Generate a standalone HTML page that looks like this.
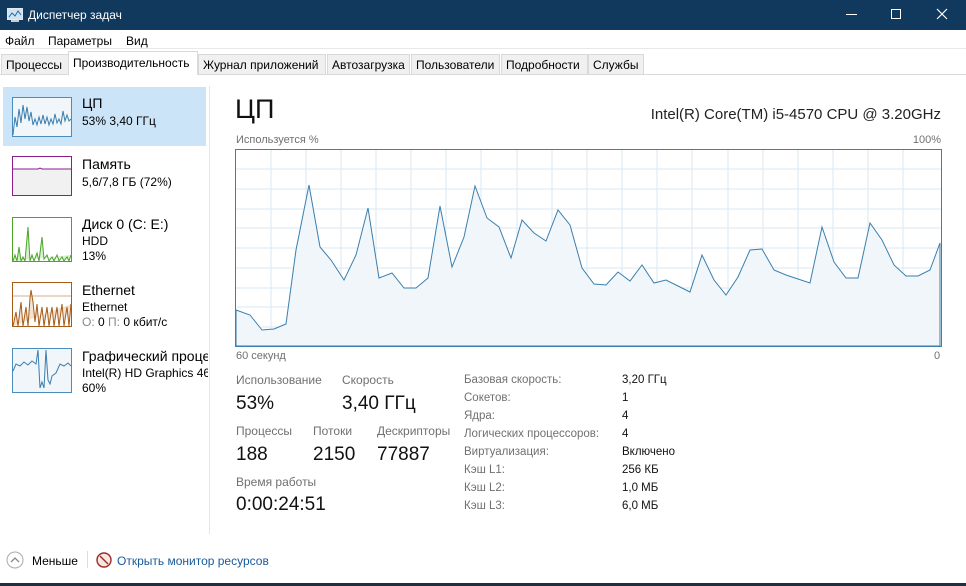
<!DOCTYPE html>
<html><head><meta charset="utf-8"><style>
*{margin:0;padding:0;box-sizing:border-box}
body{width:966px;height:586px;overflow:hidden;background:#fff;font-family:"Liberation Sans",sans-serif;color:#000;position:relative}
.a{position:absolute;white-space:nowrap}
.tb{left:0;top:0;width:966px;height:30px;background:#11395e;color:#fff;font-size:12px}
.tab{position:absolute;top:54px;height:21px;background:#f0f0f0;border:1px solid #d9d9d9;font-size:12px;padding:3px 4px 0 4px}
.g{color:#707070;font-size:12px}
.big{font-size:19px;color:#111}
.r{font-size:11.5px;color:#707070}
.v{font-size:11.5px;color:#111}
</style></head><body>
<div class="a tb">
 <svg class="a" style="left:7px;top:8px" width="16" height="14"><rect x="0.5" y="0.5" width="15" height="11" fill="#cfe3f3" stroke="#dfe9f2"/><path d="M2 9 L5 5 L8 8 L11 3 L14 7" stroke="#1f6aa8" fill="none"/><rect x="4" y="12" width="8" height="2" fill="#ccc"/></svg>
 <span class="a" style="left:28px;top:8px">Диспетчер задач</span>
 <div class="a" style="left:846px;top:14px;width:11px;height:1px;background:#fff"></div>
 <div class="a" style="left:891px;top:9px;width:10px;height:10px;border:1px solid #fff"></div>
 <svg class="a" style="left:936px;top:8px" width="12" height="12"><path d="M1 1L11 11M11 1L1 11" stroke="#fff" stroke-width="1.2"/></svg>
</div>
<div class="a" style="left:5px;top:34px;font-size:12px">Файл</div>
<div class="a" style="left:48px;top:34px;font-size:12px">Параметры</div>
<div class="a" style="left:126px;top:34px;font-size:12px">Вид</div>
<div class="a" style="left:0;top:48px;width:966px;height:1px;background:#e8e8e8"></div>
<div class="a" style="left:0;top:74px;width:966px;height:1px;background:#d9d9d9"></div>
<div class="tab" style="left:1px;width:68px">Процессы</div>
<div class="tab" style="left:68px;top:51px;height:24px;width:130px;background:#fff;border-bottom:none;padding-top:4px">Производительность</div>
<div class="tab" style="left:198px;width:128px">Журнал приложений</div>
<div class="tab" style="left:327px;width:83px">Автозагрузка</div>
<div class="tab" style="left:411px;width:89px">Пользователи</div>
<div class="tab" style="left:501px;width:87px">Подробности</div>
<div class="tab" style="left:588px;width:56px">Службы</div>

<div class="a" style="left:3px;top:87px;width:203px;height:59px;background:#cce4f7"></div>
<div class="a" style="left:209px;top:86px;width:1px;height:448px;background:#e6e6e6"></div>
<!-- thumbs -->
<svg class="a" style="left:12px;top:97px" width="60" height="40"><rect x="0.5" y="0.5" width="59" height="39" fill="#f1f6fa" stroke="#4a8cbd"/><path d="M1 38 L3 20 L5 30 L7 12 L9 26 L11 8 L13 22 L15 10 L17 24 L19 15 L21 28 L23 22 L25 28 L27 20 L29 27 L31 18 L33 27 L35 20 L37 28 L39 22 L41 27 L43 17 L45 26 L47 22 L49 27 L51 14 L53 24 L55 18 L57 24 L59 22" stroke="#3a7dae" fill="none"/></svg>
<svg class="a" style="left:12px;top:156px" width="60" height="40"><rect x="0.5" y="0.5" width="59" height="39" fill="#fff" stroke="#8b1e8c"/><rect x="1" y="13" width="58" height="26" fill="#f1f1f2"/><path d="M1 13 L26 13 L28 12 L30 13 L59 13" stroke="#8b1e8c" fill="none"/></svg>
<svg class="a" style="left:12px;top:217px" width="60" height="45"><rect x="0.5" y="0.5" width="59" height="44" fill="#fff" stroke="#4aa42a"/><path d="M1 44 L3 38 L5 44 L7 30 L9 44 L11 40 L13 44 L16 10 L18 44 L20 38 L22 44 L25 36 L27 44 L30 20 L32 42 L35 38 L37 44 L40 40 L42 44 L45 38 L47 44 L50 40 L52 44 L55 40 L57 44 L59 38" stroke="#4aa42a" fill="#d9efcf"/></svg>
<svg class="a" style="left:12px;top:282px" width="60" height="45"><rect x="0.5" y="0.5" width="59" height="44" fill="#fff" stroke="#a75b17"/><path d="M1 14 L59 14" stroke="#a75b17" stroke-width=".6"/><path d="M1 44 L4 30 L6 44 L9 20 L11 44 L14 25 L16 44 L18 16 L19 8 L21 20 L23 40 L25 22 L27 44 L30 25 L32 44 L35 25 L37 44 L40 25 L42 44 L45 25 L47 44 L50 22 L52 44 L55 25 L57 44 L59 22" stroke="#a75b17" fill="#f3e3d2"/></svg>
<svg class="a" style="left:12px;top:348px" width="60" height="45"><rect x="0.5" y="0.5" width="59" height="44" fill="#f1f6fa" stroke="#4a8cbd"/><path d="M1 23 L4 16 L8 18 L12 14 L16 17 L20 13 L24 16 L26 2 L28 40 L30 34 L32 40 L34 2 L36 32 L38 36 L40 28 L44 25 L48 16 L52 18 L56 15 L59 18" stroke="#3a7dae" fill="none"/></svg>
<div class="a" style="left:82px;top:95px;font-size:14px">ЦП</div>
<div class="a" style="left:82px;top:114px;font-size:12px">53% 3,40 ГГц</div>
<div class="a" style="left:82px;top:156px;font-size:14px">Память</div>
<div class="a" style="left:82px;top:175px;font-size:12px">5,6/7,8 ГБ (72%)</div>
<div class="a" style="left:82px;top:216px;font-size:14px">Диск 0 (C: E:)</div>
<div class="a" style="left:82px;top:234px;font-size:12px">HDD</div>
<div class="a" style="left:82px;top:249px;font-size:12px">13%</div>
<div class="a" style="left:82px;top:282px;font-size:14px">Ethernet</div>
<div class="a" style="left:82px;top:300px;font-size:12px">Ethernet</div>
<div class="a" style="left:82px;top:315px;font-size:12px"><span style="color:#888">О:</span> 0 <span style="color:#888">П:</span> 0 кбит/с</div>
<div class="a" style="left:82px;top:348px;width:126px;overflow:hidden;font-size:14px">Графический процессор</div>
<div class="a" style="left:82px;top:366px;width:126px;overflow:hidden;font-size:12px">Intel(R) HD Graphics 4600</div>
<div class="a" style="left:82px;top:381px;font-size:12px">60%</div>

<div class="a" style="left:235px;top:94px;font-size:27px;color:#111">ЦП</div>
<div class="a" style="right:25px;top:106px;font-size:15px;color:#222">Intel(R) Core(TM) i5-4570 CPU @ 3.20GHz</div>
<div class="a g" style="left:236px;top:134px;font-size:11px">Используется %</div>
<div class="a g" style="right:25px;top:134px;font-size:11px">100%</div>
<svg class="a" style="left:235px;top:149px" width="707" height="199">
<g stroke="#d9eaf4" stroke-width="1">
<path d="M36 0V198M71 0V198M106 0V198M141 0V198M176 0V198M211 0V198M246 0V198M282 0V198M317 0V198M352 0V198M387 0V198M422 0V198M457 0V198M493 0V198M528 0V198M563 0V198M598 0V198M633 0V198M668 0V198"/>
<path d="M0 20H706M0 40H706M0 60H706M0 79H706M0 99H706M0 119H706M0 139H706M0 158H706M0 178H706"/>
</g>
<g transform="translate(-235,-149)">
<path d="M236 310 L250 315 L262 330 L274 329 L286 324 L296 250 L309 185 L320 247 L331 260 L344 280 L356 255 L368 208 L379 278 L392 273 L404 288 L416 288 L428 278 L440 206 L452 267 L464 237 L475 186 L487 218 L499 227 L511 258 L522 220 L534 233 L546 241 L558 210 L570 225 L582 268 L594 284 L606 285 L618 272 L630 281 L642 265 L654 283 L666 280 L678 286 L690 292 L702 255 L714 280 L726 295 L738 277 L750 250 L762 249 L774 270 L786 275 L798 279 L810 283 L822 227 L834 262 L846 278 L858 278 L870 223 L882 240 L894 265 L906 276 L918 276 L930 270 L940 243 L940 346 L236 346Z" fill="#f1f6fa" stroke="#3b7fae" stroke-width="1"/>
</g>
<rect x="0.5" y="0.5" width="706" height="197" fill="none" stroke="#3b7fae"/>
</svg>
<div class="a g" style="left:236px;top:350px;font-size:11px">60 секунд</div>
<div class="a g" style="left:934px;top:350px;font-size:11px">0</div>

<div class="a g" style="left:236px;top:373px">Использование</div>
<div class="a g" style="left:342px;top:373px">Скорость</div>
<div class="a big" style="left:236px;top:393px">53%</div>
<div class="a big" style="left:342px;top:393px">3,40 ГГц</div>
<div class="a g" style="left:236px;top:424px">Процессы</div>
<div class="a g" style="left:313px;top:424px">Потоки</div>
<div class="a g" style="left:377px;top:424px">Дескрипторы</div>
<div class="a big" style="left:236px;top:444px">188</div>
<div class="a big" style="left:313px;top:444px">2150</div>
<div class="a big" style="left:377px;top:444px">77887</div>
<div class="a g" style="left:236px;top:475px">Время работы</div>
<div class="a big" style="left:236px;top:494px">0:00:24:51</div>

<div class="a r" style="left:464px;top:374px">Базовая скорость:</div><div class="a v" style="left:622px;top:374px">3,20 ГГц</div>
<div class="a r" style="left:464px;top:392px">Сокетов:</div><div class="a v" style="left:622px;top:392px">1</div>
<div class="a r" style="left:464px;top:410px">Ядра:</div><div class="a v" style="left:622px;top:410px">4</div>
<div class="a r" style="left:464px;top:428px">Логических процессоров:</div><div class="a v" style="left:622px;top:428px">4</div>
<div class="a r" style="left:464px;top:446px">Виртуализация:</div><div class="a v" style="left:622px;top:446px">Включено</div>
<div class="a r" style="left:464px;top:464px">Кэш L1:</div><div class="a v" style="left:622px;top:464px">256 КБ</div>
<div class="a r" style="left:464px;top:482px">Кэш L2:</div><div class="a v" style="left:622px;top:482px">1,0 МБ</div>
<div class="a r" style="left:464px;top:500px">Кэш L3:</div><div class="a v" style="left:622px;top:500px">6,0 МБ</div>

<svg class="a" style="left:6px;top:551px" width="18" height="18"><circle cx="9" cy="9" r="8" fill="#fff" stroke="#aaa"/><path d="M5 11L9 7L13 11" stroke="#888" fill="none" stroke-width="1.3"/></svg>
<div class="a" style="left:32px;top:554px;font-size:12px">Меньше</div>
<div class="a" style="left:87px;top:551px;width:1px;height:17px;background:#ddd"></div>
<svg class="a" style="left:96px;top:552px" width="16" height="16"><circle cx="8" cy="8" r="7" fill="#f6e8e0" stroke="#9b2a2a" stroke-width="1.4"/><path d="M4 4L12 12" stroke="#9b2a2a" stroke-width="1.4"/></svg>
<div class="a" style="left:117px;top:554px;font-size:12px;color:#1a5a99">Открыть монитор ресурсов</div>
<div class="a" style="left:0;top:583px;width:966px;height:3px;background:#1d2f40"></div>
</body></html>
